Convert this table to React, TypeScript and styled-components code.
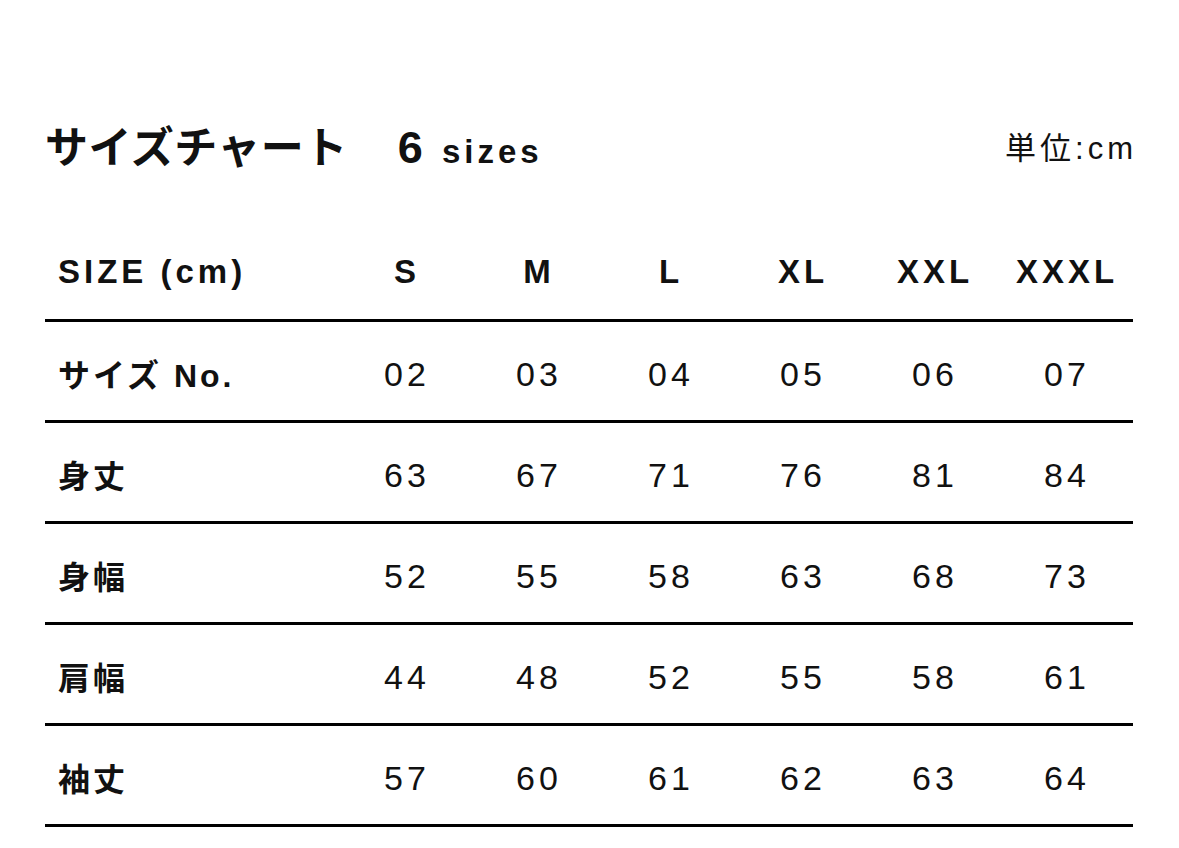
import styled, { createGlobalStyle } from 'styled-components';

const GlobalStyle = createGlobalStyle`
    html, body {
        margin: 0;
        padding: 0;
        background: #ffffff;
    }
    body {
        font-family: "Liberation Sans", "Noto Sans CJK JP", sans-serif;
        color: #111111;
    }
`;

type row = {
    label: string,
    values: string[],
}

const sizes = ['S', 'M', 'L', 'XL', 'XXL', 'XXXL'];

const rows: row[] = [
    { label: 'サイズ No.', values: ['02', '03', '04', '05', '06', '07'] },
    { label: '身丈', values: ['63', '67', '71', '76', '81', '84'] },
    { label: '身幅', values: ['52', '55', '58', '63', '68', '73'] },
    { label: '肩幅', values: ['44', '48', '52', '55', '58', '61'] },
    { label: '袖丈', values: ['57', '60', '61', '62', '63', '64'] },
];

export default function App() {
    return (
        <Page>
            <GlobalStyle />
            <TitleBar>
                <Title>
                    サイズチャート
                    <Count>
                        <CountNum>6</CountNum> sizes
                    </Count>
                </Title>
                <Unit>単位:cm</Unit>
            </TitleBar>
            <Table>
                <Row>
                    <HeadLabel>SIZE (cm)</HeadLabel>
                    {sizes.map(s => (
                        <HeadCell key={s}>{s}</HeadCell>
                    ))}
                </Row>
                {rows.map(r => (
                    <Row key={r.label}>
                        <Label>{r.label}</Label>
                        {r.values.map((v, i) => (
                            <Cell key={i}>{v}</Cell>
                        ))}
                    </Row>
                ))}
            </Table>
        </Page>
    );
}

const Page = styled.div`
    padding: 100px 46px 0 45px;
    width: 100%;
    box-sizing: border-box;
`;

const TitleBar = styled.header`
    display: flex;
    justify-content: space-between;
    align-items: center;
    height: 88px;
    margin-bottom: 33px;
`;

const Title = styled.h1`
    margin: 0;
    display: flex;
    align-items: baseline;
    font-family: "Noto Sans CJK JP", sans-serif;
    font-size: 43px;
    font-weight: 700;
    letter-spacing: 0.5px;
`;

const Count = styled.span`
    margin-left: 50px;
    font-family: "Liberation Sans", sans-serif;
    font-size: 33px;
    font-weight: 700;
    letter-spacing: 4px;
`;

const CountNum = styled.span`
    font-size: 45px;
    margin-right: 2px;
`;

const Unit = styled.div`
    font-family: "Liberation Sans", "Noto Sans CJK JP", sans-serif;
    font-size: 31px;
    font-weight: 400;
    letter-spacing: 4px;
    margin-right: -4px;
    padding-top: 2px;
`;

const Table = styled.div`
    display: flex;
    flex-direction: column;
`;

const Row = styled.div`
    display: grid;
    grid-template-columns: 296px repeat(6, 1fr);
    align-items: center;
    height: 98px;
    border-bottom: 3px solid #000000;
`;

const HeadLabel = styled.div`
    padding: 3px 0 0 13px;
    font-family: "Liberation Sans", sans-serif;
    font-size: 33px;
    font-weight: 700;
    letter-spacing: 4px;
`;

const HeadCell = styled.div`
    padding-top: 3px;
    text-align: center;
    font-family: "Liberation Sans", sans-serif;
    font-size: 33px;
    font-weight: 700;
    letter-spacing: 4px;
`;

const Label = styled.div`
    padding: 4px 0 0 13px;
    font-family: "Liberation Sans", "Noto Sans CJK JP", sans-serif;
    font-size: 32px;
    font-weight: 700;
    letter-spacing: 3px;
`;

const Cell = styled.div`
    padding-top: 6px;
    text-align: center;
    font-family: "Liberation Sans", sans-serif;
    font-size: 34px;
    font-weight: 400;
    letter-spacing: 4px;
`;
